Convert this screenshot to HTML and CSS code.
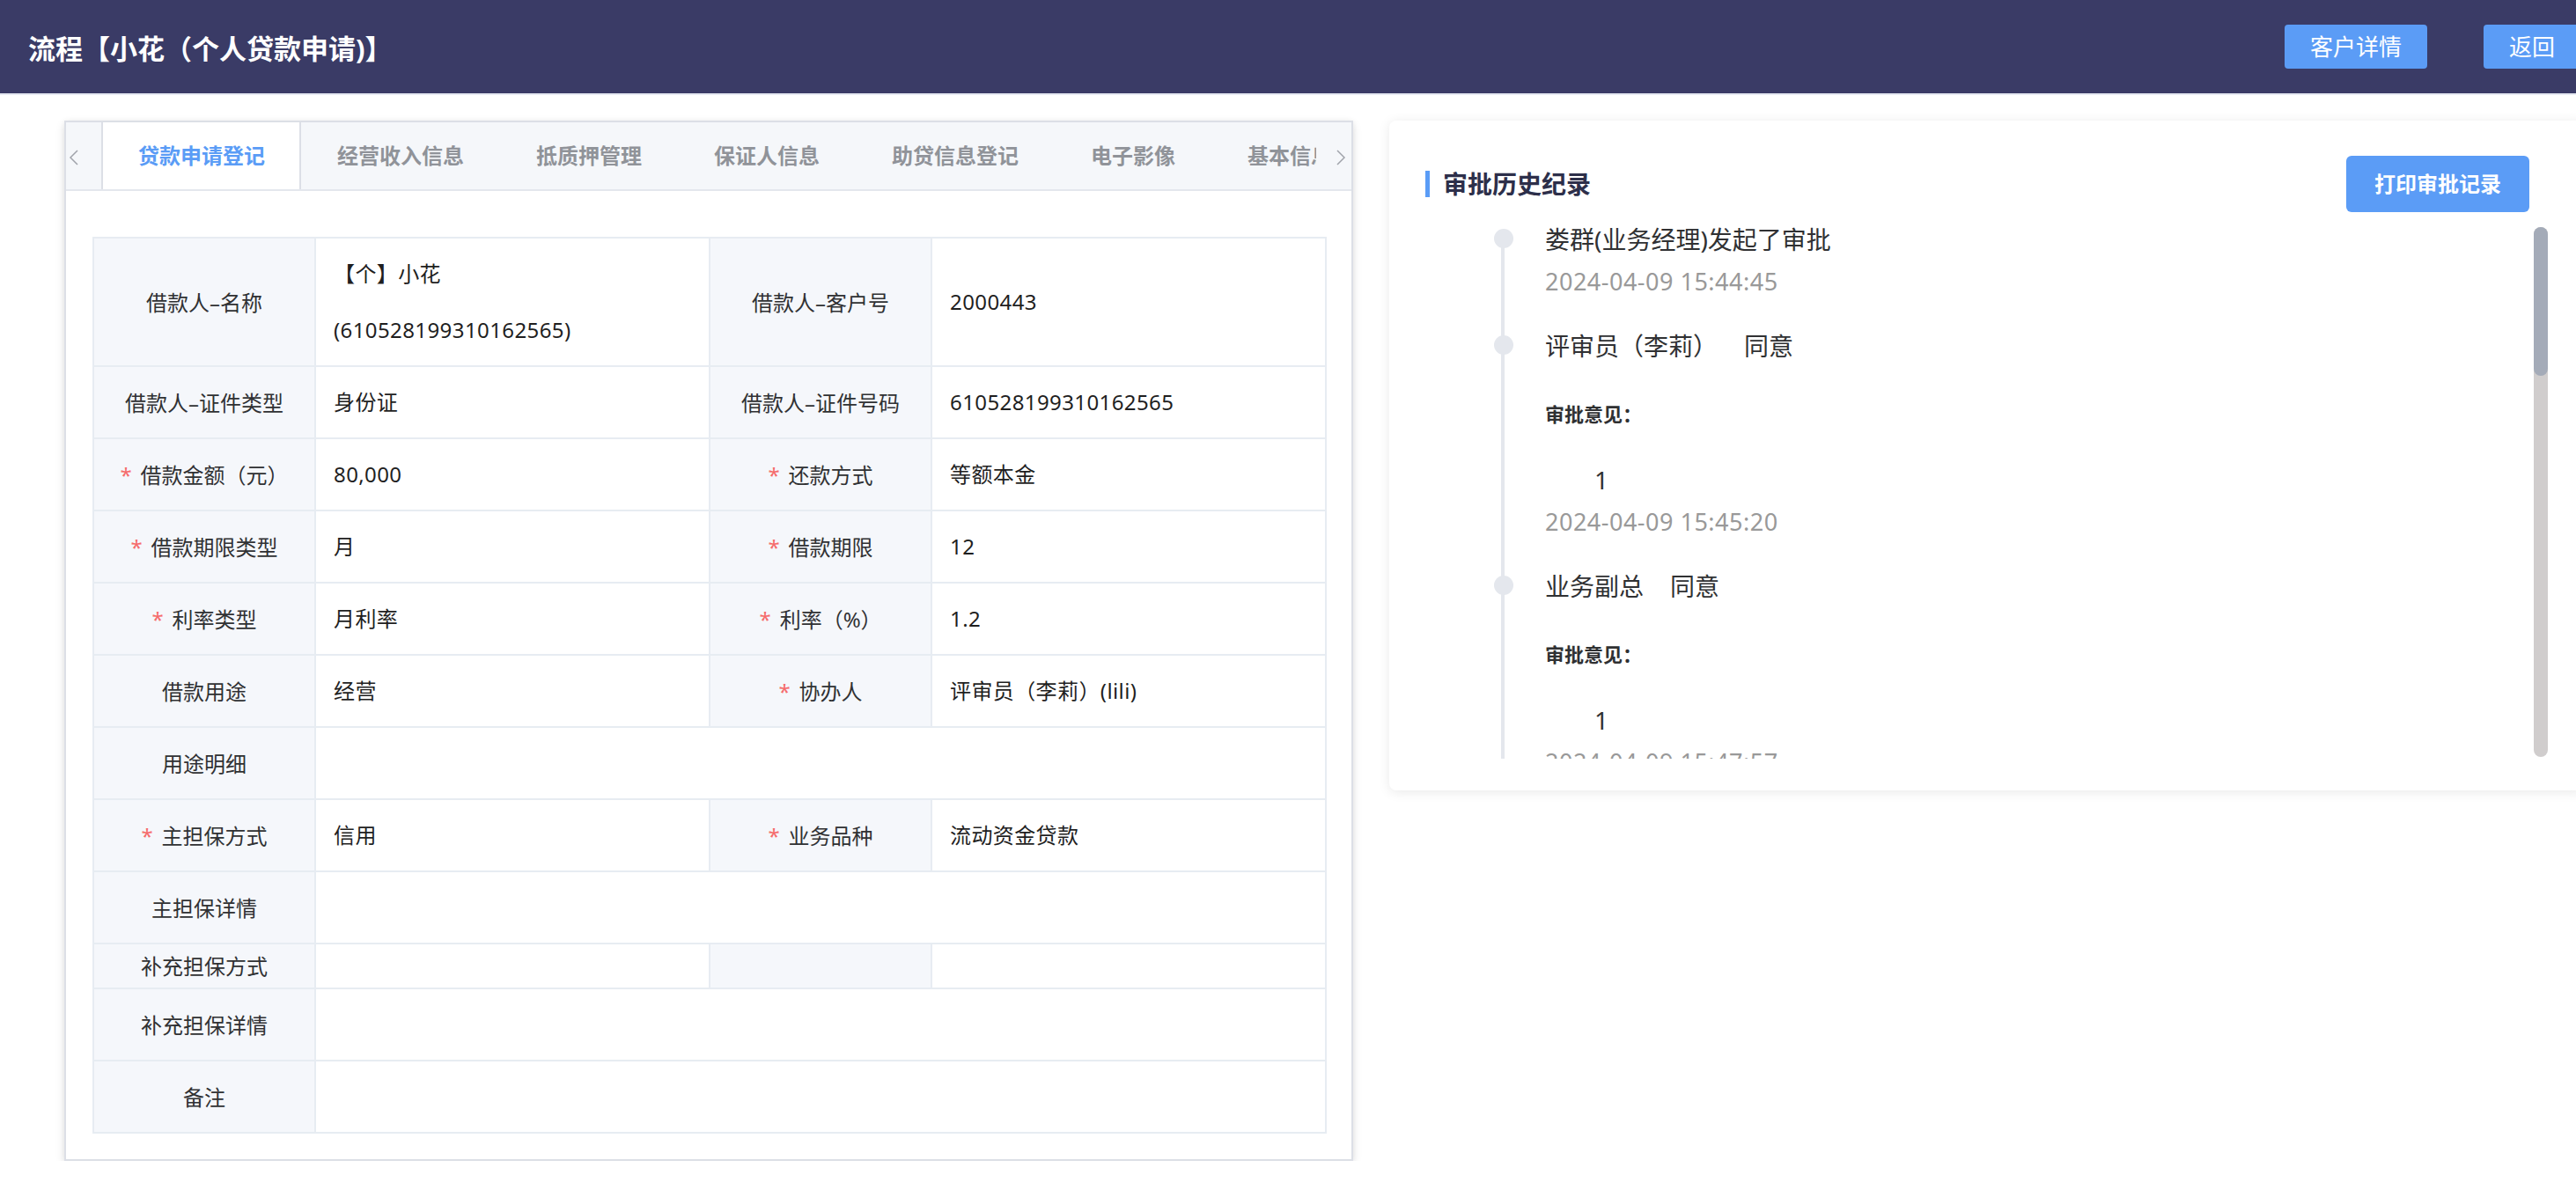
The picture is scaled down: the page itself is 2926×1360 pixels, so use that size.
FILE: index.html
```html
<!DOCTYPE html>
<html lang="zh-CN">
<head>
<meta charset="utf-8">
<title>流程【小花（个人贷款申请)】</title>
<link rel="stylesheet" href="styles.css">
</head>
<body>
<div class="page">
  <header class="topbar">
    <h1 class="page-title">流程【小花（个人贷款申请)】</h1>
    <div class="top-actions">
      <button class="btn">客户详情</button>
      <button class="btn">返回</button>
    </div>
  </header>

  <main class="main">
    <section class="tabs-card">
      <div class="tabs-header">
        <span class="tab-arrow tab-prev">
          <svg width="12" height="20" viewBox="0 0 12 20"><path d="M10 2 L2 10 L10 18" fill="none" stroke="#a0a3aa" stroke-width="1.5"/></svg>
        </span>
        <div class="tabs-nav">
          <div class="tab active">贷款申请登记</div>
          <div class="tab">经营收入信息</div>
          <div class="tab">抵质押管理</div>
          <div class="tab">保证人信息</div>
          <div class="tab">助贷信息登记</div>
          <div class="tab">电子影像</div>
          <div class="tab">基本信息</div>
        </div>
        <span class="tab-arrow tab-next">
          <svg width="12" height="20" viewBox="0 0 12 20"><path d="M2 2 L10 10 L2 18" fill="none" stroke="#a0a3aa" stroke-width="1.5"/></svg>
        </span>
      </div>

      <div class="tabs-body">
        <table class="info-table">
          <colgroup>
            <col class="c-label"><col class="c-value"><col class="c-label"><col class="c-value">
          </colgroup>
          <tbody>
            <tr>
              <td class="lb">借款人–名称</td>
              <td class="val">【个】小花<br>(610528199310162565)</td>
              <td class="lb">借款人–客户号</td>
              <td class="val">2000443</td>
            </tr>
            <tr>
              <td class="lb">借款人–证件类型</td>
              <td class="val">身份证</td>
              <td class="lb">借款人–证件号码</td>
              <td class="val">610528199310162565</td>
            </tr>
            <tr>
              <td class="lb"><span class="req">*</span>借款金额（元）</td>
              <td class="val">80,000</td>
              <td class="lb"><span class="req">*</span>还款方式</td>
              <td class="val">等额本金</td>
            </tr>
            <tr>
              <td class="lb"><span class="req">*</span>借款期限类型</td>
              <td class="val">月</td>
              <td class="lb"><span class="req">*</span>借款期限</td>
              <td class="val">12</td>
            </tr>
            <tr>
              <td class="lb"><span class="req">*</span>利率类型</td>
              <td class="val">月利率</td>
              <td class="lb"><span class="req">*</span>利率（%）</td>
              <td class="val">1.2</td>
            </tr>
            <tr>
              <td class="lb">借款用途</td>
              <td class="val">经营</td>
              <td class="lb"><span class="req">*</span>协办人</td>
              <td class="val">评审员（李莉）(lili)</td>
            </tr>
            <tr>
              <td class="lb">用途明细</td>
              <td class="val" colspan="3"><div class="blank"></div></td>
            </tr>
            <tr>
              <td class="lb"><span class="req">*</span>主担保方式</td>
              <td class="val">信用</td>
              <td class="lb"><span class="req">*</span>业务品种</td>
              <td class="val">流动资金贷款</td>
            </tr>
            <tr>
              <td class="lb">主担保详情</td>
              <td class="val" colspan="3"><div class="blank"></div></td>
            </tr>
            <tr>
              <td class="lb">补充担保方式</td>
              <td class="val"></td>
              <td class="lb"></td>
              <td class="val"></td>
            </tr>
            <tr>
              <td class="lb">补充担保详情</td>
              <td class="val" colspan="3"><div class="blank"></div></td>
            </tr>
            <tr>
              <td class="lb">备注</td>
              <td class="val" colspan="3"><div class="blank"></div></td>
            </tr>
          </tbody>
        </table>
      </div>
    </section>

    <section class="history-card">
      <div class="history-head">
        <h2 class="history-title">审批历史纪录</h2>
        <button class="btn btn-print">打印审批记录</button>
      </div>
      <div class="history-scroll">
        <ul class="timeline">
          <li class="tl-item">
            <span class="tl-dot"></span>
            <div class="tl-title">娄群(业务经理)发起了审批</div>
            <div class="tl-time">2024-04-09 15:44:45</div>
          </li>
          <li class="tl-item">
            <span class="tl-dot"></span>
            <div class="tl-title">评审员（李莉）<span class="tl-result">同意</span></div>
            <div class="tl-label">审批意见：</div>
            <p class="tl-comment">1</p>
            <div class="tl-time">2024-04-09 15:45:20</div>
          </li>
          <li class="tl-item">
            <span class="tl-dot"></span>
            <div class="tl-title">业务副总<span class="tl-result">同意</span></div>
            <div class="tl-label">审批意见：</div>
            <p class="tl-comment">1</p>
            <div class="tl-time">2024-04-09 15:47:57</div>
          </li>
        </ul>
        <div class="scrollbar"><div class="scrollbar-thumb"></div></div>
      </div>
    </section>
  </main>
</div>
</body>
</html>
```

FILE: styles.css
```css
html, body {
  margin: 0;
  padding: 0;
  overflow: hidden;
  background: #ffffff;
}

body {
  font-family: "Noto Sans", "Noto Sans CJK SC", sans-serif;
  color: #303133;
}

.page {
  width: 2960px;
}

/* ---------- top bar ---------- */
.topbar {
  height: 106px;
  background: #3a3b66;
  border-bottom: 2px solid #e6e9f2;
  display: flex;
  align-items: center;
  justify-content: space-between;
  padding: 0 29px 0 32px;
}

.page-title {
  margin: 0;
  font-size: 31px;
  font-weight: 700;
  color: #ffffff;
}

.top-actions {
  display: flex;
  gap: 64px;
}

.btn {
  font-family: "Noto Sans", "Noto Sans CJK SC", sans-serif;
  height: 50px;
  padding: 0 29px;
  font-size: 26px;
  color: #ffffff;
  background: #5b9cf6;
  border: none;
  border-radius: 4px;
  line-height: 50px;
}

/* ---------- main ---------- */
.main {
  display: flex;
  align-items: flex-start;
  gap: 41px;
  padding: 29px 0 0 73px;
}

/* ---------- tabs card ---------- */
.tabs-card {
  width: 1464px;
  box-sizing: border-box;
  flex: none;
  border: 2px solid #dcdfe6;
  background: #ffffff;
  box-shadow: 0 4px 10px rgba(0, 0, 0, 0.12), 0 0 6px rgba(0, 0, 0, 0.04);
}

.tabs-header {
  height: 78px;
  box-sizing: border-box;
  display: flex;
  background: #f5f7fa;
  border-bottom: 2px solid #e4e7ed;
}

.tab-arrow {
  width: 40px;
  flex: none;
  display: flex;
  align-items: center;
  padding-top: 4px;
  box-sizing: border-box;
}

.tab-prev {
  justify-content: flex-start;
  padding-left: 3px;
}

.tab-next {
  justify-content: flex-end;
  padding-right: 6px;
}

.tabs-nav {
  flex: 1;
  display: flex;
  overflow: hidden;
  white-space: nowrap;
}

.tab {
  flex: none;
  height: 78px;
  line-height: 76px;
  box-sizing: border-box;
  padding: 0 39px 0 40px;
  font-size: 24px;
  font-weight: 600;
  color: #909399;
  border-left: 2px solid transparent;
  border-right: 2px solid transparent;
}

.tab + .tab {
  padding-left: 39px;
}

.tab.active {
  background: #ffffff;
  color: #5a9cf6;
  border-left-color: #dcdfe6;
  border-right-color: #dcdfe6;
}

.tabs-body {
  padding: 52px 30px 29px 30px;
}

/* ---------- info table ---------- */
.info-table {
  width: 1400px;
  table-layout: fixed;
  border-collapse: collapse;
  font-size: 24px;
}

.c-label { width: 252px; }
.c-value { width: 448px; }

.info-table td {
  border: 2px solid #e7ecf2;
}

.lb {
  background: #f5f7fb;
  text-align: center;
  color: #303133;
  line-height: 33px;
  padding: 8px 10px;
}

.val {
  color: #1f1f1f;
  line-height: 64px;
  padding: 8px 20px;
  letter-spacing: 0.4px;
}

.blank {
  height: 64px;
}

.req {
  color: #f56c6c;
  margin-right: 10px;
}

/* ---------- history card ---------- */
.history-card {
  width: 1357px;
  flex: none;
  box-sizing: border-box;
  height: 761px;
  padding: 40px 40px 0 41px;
  background: #ffffff;
  border-radius: 8px;
  box-shadow: 0 2px 14px rgba(0, 0, 0, 0.09);
}

.history-head {
  height: 64px;
  display: flex;
  align-items: center;
  justify-content: space-between;
  margin-right: 22px;
}

.history-title {
  margin: 0;
  font-size: 28px;
  font-weight: 700;
  color: #2d2f4a;
  line-height: 30px;
  border-left: 5px solid #5a9cf6;
  padding-left: 15px;
}

.btn-print {
  height: 64px;
  line-height: 64px;
  padding: 0 32px;
  font-size: 24px;
  font-weight: 700;
  border-radius: 6px;
}

.history-scroll {
  position: relative;
  margin-top: 11px;
  height: 610px;
  overflow: hidden;
}

.timeline {
  position: relative;
  list-style: none;
  margin: 0;
  padding: 0 0 0 136px;
}

.timeline::before {
  content: "";
  position: absolute;
  left: 86px;
  top: 10px;
  bottom: 0;
  width: 4px;
  background: #e4e7ed;
}

.tl-item {
  position: relative;
  padding-bottom: 33px;
}

.tl-dot {
  position: absolute;
  left: -58px;
  top: 8px;
  width: 22px;
  height: 22px;
  border-radius: 50%;
  background: #e4e7ed;
}

.tl-title {
  font-size: 28px;
  line-height: 40px;
  color: #303133;
}

.tl-result {
  margin-left: 30px;
}

.tl-time {
  margin-top: 8px;
  font-size: 27px;
  line-height: 40px;
  letter-spacing: 0.5px;
  color: #999999;
}

.tl-label {
  margin-top: 41px;
  font-size: 22px;
  line-height: 32px;
  font-weight: 700;
  color: #303133;
}

.tl-comment {
  margin: 39px 0 0 0;
  font-size: 28px;
  line-height: 40px;
  text-indent: 56px;
  color: #303133;
}

.scrollbar {
  position: absolute;
  right: 1px;
  top: 6px;
  width: 16px;
  height: 602px;
  border-radius: 8px;
  background: #d0cdcd;
}

.scrollbar-thumb {
  height: 169px;
  border-radius: 8px;
  background: #a4abb8;
}
```
